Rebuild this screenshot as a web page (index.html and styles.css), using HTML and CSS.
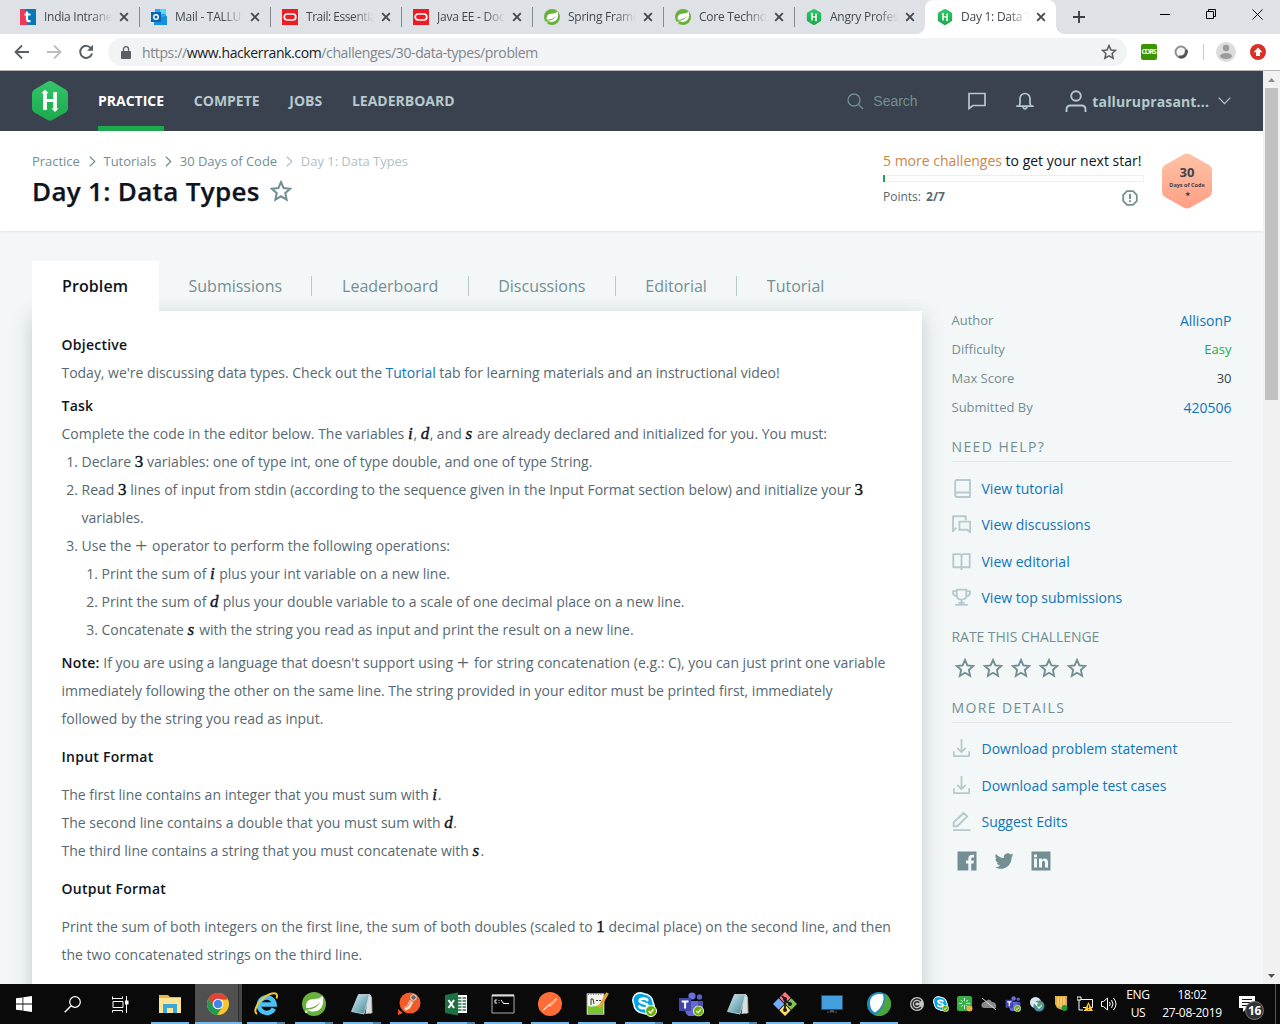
FILE: index.html
```html
<!DOCTYPE html>
<html lang="en">
<head>
<meta charset="utf-8">
<title>Day 1: Data Types | HackerRank</title>
<link rel="stylesheet" href="styles.css">
</head>
<body>
<svg class="defs" width="0" height="0">
  <defs>
    <linearGradient id="green" x1="0" y1="0" x2="0" y2="1"><stop offset="0" stop-color="#33c66a"/><stop offset="1" stop-color="#1ba94c"/></linearGradient>
    <linearGradient id="peach" x1="0" y1="0" x2="0" y2="1"><stop offset="0" stop-color="#ffc3a6"/><stop offset="1" stop-color="#ff9f86"/></linearGradient>
    <linearGradient id="glass" x1="0" y1="0" x2="1" y2="1"><stop offset="0" stop-color="#d5eef3"/><stop offset="1" stop-color="#3b8294"/></linearGradient>
    <symbol id="hr" viewBox="0 0 36 40"><path fill="url(#green)" d="M15.500.8q2.500-1.500 5 0l13 7.600q2.500 1.500 2.500 4v15q0 2.500-2.500 4l-13 7.700q-2.500 1.500-5 0l-13-7.700q-2.500-1.500-2.500-4v-15q0-2.500 2.500-4z"/><path fill="#fff" d="M11 12.200H9.200L13 8.700l3.600 3.500h-1.700V18h6.400v-7h3.600v16.500h1.700L23 31l-3.600-3.500h1.800V21h-6.300v8H11z"/></symbol>
    <symbol id="oracle" viewBox="0 0 16 16"><path fill="#ed1c24" d="M0 0h16v16H0z"/><rect x="2.200" y="5" width="11.600" height="6" rx="3" fill="none" stroke="#fff" stroke-width="1.700"/></symbol>
    <symbol id="spring" viewBox="0 0 24 24"><circle cx="12" cy="12" r="12" fill="#68b13a"/><path fill="#fff" d="M20.500 3.500c1.800 6.700.5 15.500-8.500 16-3 .1-5-.8-7.300-1.800 6 .1 11-2.700 13.800-8-4 4.500-8.300 6-14.300 6.600C3 7 9 7.200 14.500 6.700c2.500-.2 4.500-1 6-3.200z"/><circle cx="4.200" cy="19.800" r="1.200" fill="#fff"/></symbol>
    <symbol id="star" viewBox="0 0 20 20"><path fill="none" stroke="currentColor" stroke-width="1.900" stroke-linejoin="miter" d="M10 2l2.400 5.400 5.800.6-4.300 3.900 1.200 5.900-5.100-3-5.100 3 1.200-5.900L1.800 8l5.800-.6z"/></symbol>
    <symbol id="x" viewBox="0 0 10 10"><path stroke="#45494d" stroke-width="1.900" d="M1.200 1.200l7.600 7.600M8.800 1.200L1.200 8.800"/></symbol>
    <symbol id="chev" viewBox="0 0 7 11"><path fill="none" stroke="currentColor" stroke-width="1.200" d="M.8.800l5 4.700-5 4.700"/></symbol>
    <symbol id="notepad" viewBox="0 0 24 24"><path fill="#b9a078" d="M20 3l2 2 .5 16-3 1z"/><path fill="#d9dfe0" d="M18 2.500l3 .5.500 18-6 1z"/><path fill="url(#glass)" stroke="#cbdde0" stroke-width=".8" d="M8.500 2.500h11l-5.500 19.500L1.500 19.500z"/></symbol>
    <symbol id="dl" viewBox="0 0 18 18"><path fill="none" stroke="currentColor" stroke-width="1.700" d="M9 0v12M5 8.500L9 12.500l4-4M1.800 11.500v4.700h14.400v-4.700"/></symbol>
    <symbol id="check" viewBox="0 0 12 12"><circle cx="6" cy="6" r="5.500" fill="#6bae0e" stroke="#fff"/><path d="M3.500 6l2 2 3.200-4" fill="none" stroke="#fff" stroke-width="1.300"/></symbol>
    <symbol id="skype" viewBox="0 0 24 24"><circle cx="8.500" cy="8.500" r="8.500" fill="#eaf8fd"/><circle cx="15.500" cy="15.500" r="8.500" fill="#eaf8fd"/><circle cx="12" cy="12" r="11" fill="#eaf8fd"/><circle cx="8.500" cy="8.500" r="6.700" fill="#00a5e3"/><circle cx="15.500" cy="15.500" r="6.700" fill="#00a5e3"/><circle cx="12" cy="12" r="9.300" fill="#00a5e3"/><path d="M16 8.500c-1-2-8-2.500-8 .7 0 3.300 8.300 2 8.300 5.300s-7.500 3-8.600.5" fill="none" stroke="#fff" stroke-width="2.700" stroke-linecap="round"/></symbol>
    <symbol id="teams" viewBox="0 0 26 24"><circle cx="14" cy="4" r="3.600" fill="#6a70d6"/><circle cx="21.500" cy="5" r="2.700" fill="#5b60c8"/><path fill="#4b50b0" d="M17 9h8v7a4.500 4.500 0 0 1-8 2z"/><path fill="#6268d5" d="M7 9h13v8a6.500 6.500 0 0 1-13 2z"/><path fill="#4147a8" d="M1 6h12v13H1z"/><path d="M3.700 9.500h6.800M7.100 9.500v7" stroke="#fff" stroke-width="2"/></symbol>
  </defs>
</svg>

<div class="tabstrip">
  <div class="tab"><svg width="16" height="16" viewBox="0 0 16 16"><path fill="#0877b5" d="M0 0h16v16H0z"/><path fill="#f2385a" d="M0 0h5l3 16H0z"/><path d="M7 2.500v8q0 2 3.500 1.600M4.500 5.500h6" fill="none" stroke="#fff" stroke-width="2.200"/></svg><span>India Intrane</span><svg class="close"><use href="#x"/></svg></div>
  <div class="tab"><svg width="16" height="16" viewBox="0 0 16 16"><path fill="#28a8ea" d="M4 0h11v8H4z"/><path fill="#50d9ff" d="M9 0h6v5H9z"/><path fill="#1490df" d="M3 9l13-2v9H3z"/><path fill="#0a65b0" d="M0 3h10v10H0z"/><circle cx="5" cy="8" r="2.300" fill="none" stroke="#fff" stroke-width="1.500"/></svg><span>Mail - TALLU</span><svg class="close"><use href="#x"/></svg></div>
  <div class="tab"><svg width="16" height="16"><use href="#oracle"/></svg><span class="snug">Trail: Essentia</span><svg class="close"><use href="#x"/></svg></div>
  <div class="tab"><svg width="16" height="16"><use href="#oracle"/></svg><span>Java EE - Doc</span><svg class="close"><use href="#x"/></svg></div>
  <div class="tab"><svg width="16" height="16"><use href="#spring"/></svg><span>Spring Frame</span><svg class="close"><use href="#x"/></svg></div>
  <div class="tab"><svg width="16" height="16"><use href="#spring"/></svg><span>Core Technol</span><svg class="close"><use href="#x"/></svg></div>
  <div class="tab last"><svg width="16" height="16"><use href="#hr"/></svg><span>Angry Profes</span><svg class="close"><use href="#x"/></svg></div>
  <div class="tab active"><svg width="16" height="16"><use href="#hr"/></svg><span>Day 1: Data T</span><svg class="close"><use href="#x"/></svg></div>
  <svg class="plus" width="12" height="12" viewBox="0 0 12 12"><path d="M6 0v12M0 6h12" stroke="#3c4043" stroke-width="1.900"/></svg>
  <div class="winbtns">
    <svg width="11" height="11"><path d="M0 5.500h10" stroke="#000"/></svg>
    <svg width="11" height="11"><path d="M.5 2.500h7v7h-7zM2.500 2.500v-2h7v7h-2" fill="none" stroke="#000"/></svg>
    <svg width="11" height="11"><path d="M.5.500l10 10M10.500.500l-10 10" stroke="#000"/></svg>
  </div>
</div>

<div class="toolbar">
  <svg class="tb" width="16" height="16" viewBox="0 0 16 16"><path d="M15 8H2M8 1.500L1.500 8 8 14.500" fill="none" stroke="#5a5e62" stroke-width="1.800"/></svg>
  <svg class="tb" width="16" height="16" viewBox="0 0 16 16"><path d="M1 8h13M8 1.500L14.500 8 8 14.500" fill="none" stroke="#babcbe" stroke-width="1.800"/></svg>
  <svg class="tb" width="16" height="16" viewBox="0 0 16 16"><path d="M13.200 4.500A6 6 0 1 0 14 9.500" fill="none" stroke="#5a5e62" stroke-width="2"/><path d="M15 .8v6H9z" fill="#5a5e62"/></svg>
  <div class="omni">
    <svg width="10" height="13" viewBox="0 0 10 13"><path fill="#5a5e62" d="M1 5h8q1 0 1 1v6q0 1-1 1H1q-1 0-1-1V6q0-1 1-1z"/><path d="M2.500 6V3.200a2.500 2.500 0 0 1 5 0V6" fill="none" stroke="#5a5e62" stroke-width="1.300"/></svg>
    <div class="url">https://<b>www.hackerrank.com</b>/challenges/30-data-types/problem</div>
    <svg class="bm" width="16" height="16"><use href="#star"/></svg>
  </div>
  <div class="ext">
    <div class="cors">CORS</div>
    <svg width="14" height="14" viewBox="0 0 14 14"><circle cx="7" cy="7" r="5.500" fill="#f6f6f6" stroke="#8d8f90" stroke-width="2"/><path d="M12 5a5.200 5.200 0 0 1-7 6.500" fill="none" stroke="#505254" stroke-width="3"/></svg>
    <i></i>
    <svg width="20" height="20" viewBox="0 0 20 20"><circle cx="10" cy="10" r="10" fill="#dcdcdc"/><circle cx="10" cy="6" r="3.200" fill="#9b9b9b"/><ellipse cx="10" cy="14" rx="6" ry="3" fill="#9b9b9b"/></svg>
    <svg width="16" height="16" viewBox="0 0 16 16"><circle cx="8" cy="8" r="8" fill="#d93025"/><path fill="#fff" d="M8 3.500l4.500 4.700H10V12H6V8.200H3.500z"/></svg>
  </div>
</div>

<div class="viewport">
  <div class="page">
    <header class="nav">
      <svg class="logo" width="36" height="40"><use href="#hr"/></svg>
      <a class="on">PRACTICE</a><a class="compete">COMPETE</a><a class="jobs">JOBS</a><a>LEADERBOARD</a>
      <div class="search"><svg width="17" height="17" viewBox="0 0 17 17"><circle cx="7" cy="7" r="6" fill="none" stroke="#738f93" stroke-width="1.300"/><path d="M11.500 11.500l4.500 4.500" stroke="#738f93" stroke-width="1.300"/></svg>Search</div>
      <svg class="chat" width="18" height="18" viewBox="0 0 18 18"><path d="M1 1.500h16v12H5l-4 3z" fill="none" stroke="#b7c9cc" stroke-width="1.700"/></svg>
      <svg class="bell" width="18" height="18" viewBox="0 0 18 18"><path d="M.3 14.200h17.400M3 14q1-1.600 1-3V6.500a5 5 0 0 1 10 0V11q0 1.400 1 3M6.800 15q2.200 3.800 4.400 0" fill="none" stroke="#b7c9cc" stroke-width="1.700"/></svg>
      <svg class="person" width="22" height="23" viewBox="0 0 22 23"><circle cx="11" cy="6" r="4.800" fill="none" stroke="#b7c9cc" stroke-width="1.900"/><path d="M1.500 22v-2.500q0-4 4-4h11q4 0 4 4V22" fill="none" stroke="#b7c9cc" stroke-width="1.900"/></svg>
      <span class="user">talluruprasant...</span>
      <svg width="13" height="8" viewBox="0 0 13 8"><path d="M.7.700l5.800 6 5.800-6" fill="none" stroke="#b7c9cc" stroke-width="1.200"/></svg>
    </header>

    <section class="top">
      <div class="titles">
        <div class="crumbs">Practice<svg><use href="#chev"/></svg>Tutorials<svg><use href="#chev"/></svg>30 Days of Code<span><svg><use href="#chev"/></svg>Day 1: Data Types</span></div>
        <h1>Day 1: Data Types<svg width="22" height="22"><use href="#star"/></svg></h1>
      </div>
      <div class="progress">
        <div class="next"><em>5 more challenges</em> to get your next star!</div>
        <div class="bar"><i></i></div>
        <div class="points"><span>Points: <b>2/7</b></span><svg width="16" height="16" viewBox="0 0 16 16"><path d="M5 1.200h6L14.800 5v6L11 14.800H5L1.200 11V5z" fill="none" stroke="#738f93" stroke-width="1.800"/><path d="M8 4v5M8 10.300v1.700" stroke="#738f93" stroke-width="2"/></svg></div>
      </div>
      <div class="badge">
        <svg width="50" height="56" viewBox="0 0 50 56"><path fill="url(#peach)" d="M22 1.300q3-1.600 6 0L47 12q3 1.800 3 5v22q0 3.200-3 5L28 54.700q-3 1.600-6 0L3 44q-3-1.800-3-5V17q0-3.200 3-5z"/></svg>
        <div><b>30</b><small>Days of Code</small><small>★</small></div>
      </div>
    </section>

    <div class="body">
      <main>
        <nav class="tabs"><a class="cur">Problem</a><a>Submissions</a><a>Leaderboard</a><a>Discussions</a><a>Editorial</a><a>Tutorial</a></nav>
        <article>
          <h2>Objective</h2>
          <p class="first">Today, we're discussing data types. Check out the <a>Tutorial</a> tab for learning materials and an instructional video!</p>
          <h2>Task</h2>
          <p class="tight">Complete the code in the editor below. The variables <i class="mi">i</i>, <i class="md">d</i>, and <i class="ms">s</i> are already declared and initialized for you. You must:</p>
          <ol>
            <li>Declare <b class="m">3</b> variables: one of type int, one of type double, and one of type String.</li>
            <li>Read <b class="m">3</b> lines of input from stdin (according to the sequence given in the Input Format section below) and initialize your <b class="m">3</b><br>variables.</li>
            <li>Use the <span class="pl">+</span> operator to perform the following operations:
              <ol>
                <li>Print the sum of <i class="mi">i</i> plus your int variable on a new line.</li>
                <li>Print the sum of <i class="md">d</i> plus your double variable to a scale of one decimal place on a new line.</li>
                <li>Concatenate <i class="ms">s</i> with the string you read as input and print the result on a new line.</li>
              </ol>
            </li>
          </ol>
          <p class="note"><strong>Note:</strong> If you are using a language that doesn't support using <span class="pl">+</span> for string concatenation (e.g.: C), you can just print one variable<br>immediately following the other on the same line. The string provided in your editor must be printed first, immediately<br>followed by the string you read as input.</p>
          <h2>Input Format</h2>
          <p class="fmt">The first line contains an integer that you must sum with <i class="mi">i</i>.<br>The second line contains a double that you must sum with <i class="md">d</i>.<br>The third line contains a string that you must concatenate with <i class="ms">s</i>.</p>
          <h2>Output Format</h2>
          <p class="fmt">Print the sum of both integers on the first line, the sum of both doubles (scaled to <b class="m">1</b> decimal place) on the second line, and then<br>the two concatenated strings on the third line.</p>
        </article>
      </main>
      <aside>
        <dl>
          <div><dt>Author</dt><dd class="link">AllisonP</dd></div>
          <div><dt>Difficulty</dt><dd class="easy">Easy</dd></div>
          <div><dt>Max Score</dt><dd>30</dd></div>
          <div><dt>Submitted By</dt><dd class="link">420506</dd></div>
        </dl>
        <h3>NEED HELP?</h3>
        <ul>
          <li><svg viewBox="0 0 18 18"><path d="M5 .9h12v16.200H5q-2 0-2-2V2.900q0-2 2-2zM3 14.500q0-1.700 2-1.700h12"/></svg>View tutorial</li>
          <li><svg viewBox="0 0 18 18"><path d="M1 16V1.200h12V5M1 15l3-3M7 6.300h10.200v10.200L14.500 14H7z"/></svg>View discussions</li>
          <li><svg viewBox="0 0 18 18"><path d="M9 17v-2.500H1.200V2H7q2 0 2 2 0-2 2-2h5.800v12.500H9M9 3v12"/></svg>View editorial</li>
          <li><svg viewBox="0 0 18 18"><path d="M4.500 1.500h9v6q0 3-4.500 3.500-4.500-.5-4.500-3.500zM4.500 3H1q-.5 4.500 4 5M13.500 3H17q.5 4.500-4 5M9 11v5M3 16h12M6 14h6"/></svg>View top submissions</li>
        </ul>
        <h4>RATE THIS CHALLENGE</h4>
        <div class="stars"><svg><use href="#star"/></svg><svg><use href="#star"/></svg><svg><use href="#star"/></svg><svg><use href="#star"/></svg><svg><use href="#star"/></svg></div>
        <h3 class="more">MORE DETAILS</h3>
        <ul>
          <li><svg><use href="#dl"/></svg>Download problem statement</li>
          <li><svg><use href="#dl"/></svg>Download sample test cases</li>
          <li><svg viewBox="0 0 18 18"><path d="M1 17.200h16.500M1.500 13.500v-3.500L11 1l3.500 3.200-9.500 9.300z"/></svg>Suggest Edits</li>
        </ul>
        <div class="social">
          <svg viewBox="0 0 20 20"><path fill="#738f93" d="M.5.500h19v19h-5.300v-7h2.300l.4-2.900h-2.700V7.800q0-1.400 1.400-1.400h1.500V3.800q-5.800-.8-5.800 3.700v2.100H9v2.900h2.300v7H.5z"/></svg>
          <svg viewBox="0 0 24 24"><path fill="#738f93" d="M23.600 4.900c-.8.400-1.700.6-2.700.8 1-.6 1.700-1.500 2-2.600-.9.500-1.900.9-3 1.100a4.700 4.700 0 0 0-8 4.300C8 8.300 4.500 6.400 2.200 3.600c-1.200 2.100-.6 4.900 1.500 6.300-.8 0-1.500-.2-2.100-.6 0 2.200 1.500 4.200 3.800 4.700-.7.200-1.400.2-2.100.1.600 1.900 2.300 3.200 4.400 3.300A9.500 9.500 0 0 1 .7 19.300c9.500 5.600 20.600-.5 20.500-12 .9-.7 1.700-1.500 2.400-2.400z"/></svg>
          <svg viewBox="0 0 20 20"><path fill="#738f93" d="M.5.500h19v19H.5z"/><path fill="#f3f7f7" d="M3 7.500h3v9H3zM3 3.500h3v2.700H3zM8 7.500h2.800V9c1.400-2.500 6.200-2.300 6.200 2v5.500h-3v-5c0-2.300-3-2.200-3 0v5H8z"/></svg>
        </div>
      </aside>
    </div>
  </div>
  <div class="scroll"><svg width="17" height="17"><path d="M5 11l3.500-4 3.500 4z" fill="#8e8e8e"/></svg><i></i><svg class="down" width="17" height="17"><path d="M5 7l3.500 4L12 7z" fill="#505050"/></svg></div>
</div>

<footer class="taskbar">
  <div class="sys"><svg width="16" height="16" viewBox="0 0 16 16"><path fill="#fff" d="M0 2.300L6.500 1.400v6.200H0zM7.300 1.300L16 0v7.600H7.300zM0 8.400h6.500v6.200L0 13.700zM7.300 8.400H16V16l-8.700-1.300z"/></svg></div>
  <div class="sys"><svg width="17" height="17" viewBox="0 0 17 17"><circle cx="11" cy="6" r="5.300" fill="none" stroke="#fff" stroke-width="1.200"/><path d="M7.200 9.800L.7 16.300" stroke="#fff" stroke-width="1.400"/></svg></div>
  <div class="sys"><svg width="17" height="17" viewBox="0 0 17 17"><path d="M.5 3.500v-3M.5 2.500h10v-2M1 5.500h10v6H1zM.5 16.500v-2h10v2M14.500 0v17" fill="none" stroke="#fff"/><path fill="#fff" d="M13 4.500h3.500v4H13z"/></svg></div>
  <div class="app first"><svg viewBox="0 0 24 24"><path fill="#e7b849" d="M1 3h9l2 2h11v16H1z"/><path fill="#ffe494" d="M1 6h22v15H1z"/><path fill="#3aa7db" d="M5 12h14v9h-4v-5H9v5H5z"/></svg></div>
  <div class="app chrome"><svg viewBox="0 0 24 24"><circle cx="12" cy="12" r="11" fill="#f8c62f"/><path fill="#dc4437" d="M2.500 6.500A11 11 0 0 1 22 7.500H12l-5 7z"/><path fill="#229a56" d="M2.500 6.500A11 11 0 0 0 11 23l5.500-8.500-9 0z"/><circle cx="12" cy="12" r="5.300" fill="#fff"/><circle cx="12" cy="12" r="4.300" fill="#4385ed"/></svg></div>
  <div class="app multi"><svg viewBox="0 0 24 24"><path d="M19.800 16.500A7.800 7.800 0 1 1 20.500 12.500H7" fill="none" stroke="#49c2f3" stroke-width="4.600"/><path d="M3 22C-4 17 13-1 21.500 1.500q2.500 1 1 5" fill="none" stroke="#f3c53c" stroke-width="2"/></svg></div>
  <div class="app multi"><svg><use href="#spring"/></svg></div>
  <div class="app n multi"><svg><use href="#notepad"/></svg></div>
  <div class="app n"><svg viewBox="0 0 24 24"><circle cx="13" cy="11" r="10.500" fill="#f15a29"/><path d="M14.500 9l-3 6-4 2" stroke="#f7ddd0" stroke-width="4" fill="none"/><path d="M14 9l-3 5-4 2" stroke="#e0764f" fill="none"/><circle cx="16.500" cy="5.500" r="2.800" fill="#666" stroke="#eee"/><path fill="#e95420" d="M1 17l5 4-5 2z"/></svg></div>
  <div class="app n multi"><svg viewBox="0 0 24 24"><path fill="#fff" d="M12 3h11v18H12z"/><path d="M14 6h3.500M14 9h3.500M14 12h3.500M14 15h3.500M14 18h3.500M18.500 6H22M18.500 9H22M18.500 12H22M18.500 15H22M18.500 18H22" stroke="#217346" stroke-width="1.700"/><path fill="#1d7044" d="M1 3l13-2.500v23L1 21z"/><path d="M4.500 8l5.500 8M10 8l-5.500 8" stroke="#fff" stroke-width="2"/></svg></div>
  <div class="app n"><svg viewBox="0 0 24 24"><path fill="#050505" stroke="#a9adb0" d="M1 3h22v18H1z"/><path stroke="#dadddf" stroke-width="2" d="M1 3.500h22"/><path d="M6 8H4v3h2M8 8v.8M8 10.300v.8M10 8l3 4M13 11.500h5" stroke="#fff" fill="none"/></svg></div>
  <div class="app n"><svg viewBox="0 0 24 24"><circle cx="12" cy="12" r="12" fill="#ff6c37"/><path d="M5 18.500l7-6.500" stroke="#fde5dc" stroke-width="1.200"/><path d="M10 13.500l7-6.500 2-.8-.8 2.300-6 6z" fill="#fde5dc"/><path d="M12 13l5-5" stroke="#ff6c37" stroke-width=".8"/></svg></div>
  <div class="app n"><svg viewBox="0 0 24 24"><path fill="#f5f5ee" stroke="#999" d="M2 1.500h17v21H2z"/><path d="M3 2h15" stroke="#888" stroke-dasharray="1 1.500" stroke-width="2"/><path fill="#77c52f" d="M3 14q9 2 15-4v12H3z"/><path d="M6 13V7h2l1 5M11 8.500h2M14 8.500h2" stroke="#333" fill="none"/><path d="M22.500 1L14 16" stroke="#e5a52e" stroke-width="3"/></svg></div>
  <div class="app n multi"><svg viewBox="0 0 24 24"><use href="#skype" width="23" height="23"/><use href="#check" x="13" y="13" width="12" height="12"/></svg></div>
  <div class="app n"><svg viewBox="0 0 24 24"><use href="#teams" x="-1" width="26" height="24"/><use href="#check" x="14" y="13.500" width="11" height="11"/></svg></div>
  <div class="app n multi"><svg><use href="#notepad"/></svg></div>
  <div class="app n"><svg viewBox="0 0 24 24"><path fill="#f47c7c" d="M12 0l5.700 5.700-5.700 5.700-5.700-5.700z"/><path fill="#75a9f9" d="M5.700 6.300l5.700 5.700-5.700 5.700L0 12z"/><path fill="#7fc25c" d="M18.300 6.300L24 12l-5.700 5.700-5.700-5.700z"/><path fill="#ffe066" d="M12 12.600l5.700 5.700L12 24l-5.700-5.700z"/><path d="M9 4l3 3v11M12 8l5 4" fill="none" stroke="#201a1a" stroke-width="1.800"/><g fill="#201a1a"><circle cx="12" cy="7" r="2"/><circle cx="17" cy="12" r="2"/><circle cx="12" cy="18" r="2"/></g></svg></div>
  <div class="app n"><svg viewBox="0 0 24 24"><path fill="#459fdf" stroke="#24506e" d="M1.500 3.500h21v14h-21z"/><path fill="#47515a" d="M10 18h4v1.500h3v1H7v-1h3z"/></svg></div>
  <div class="app n"><svg viewBox="0 0 24 24"><circle cx="12" cy="12" r="12" fill="#218bc0"/><path fill="#4aa53a" d="M18 1.600A12 12 0 0 1 8 23.300Q19 16 18 1.600z"/><path fill="#fff" d="M3 11C3 4 9 1 16 2.500c2 6-2 15-8 18Q3 18 3 11z"/></svg></div>
  <div class="tray">
    <svg viewBox="0 0 16 16"><circle cx="8" cy="8" r="7" fill="#c7c7c7"/><path d="M12 5a5 5 0 1 0 0 6M10 7a2.300 2.300 0 1 0 0 2" fill="none" stroke="#292929" stroke-width="1.500"/></svg>
    <svg viewBox="0 0 16 16"><use href="#skype" width="15" height="15"/><use href="#check" x="9" y="9" width="7" height="7"/></svg>
    <svg viewBox="0 0 16 16"><rect width="15" height="15" rx="2" fill="#37ad4a"/><path d="M7.500 2v11M2 7.500h11M4 4l7 7M11 4l-7 7" stroke="#dff3dc" stroke-dasharray="3 4 4"/><circle cx="12.500" cy="12.500" r="3" fill="#e9b044"/></svg>
    <svg viewBox="0 0 16 16"><path fill="#8b8b8b" d="M3 12a3 3 0 0 1 1-6q4-5 7 0 5 0 4 6z"/><path d="M1 2l14 12" stroke="#ddd"/></svg>
    <svg viewBox="0 0 16 16"><use href="#teams" width="16" height="15"/><use href="#check" x="9" y="9" width="7" height="7"/></svg>
    <svg viewBox="0 0 16 16"><circle cx="6.500" cy="6.500" r="5.500" fill="#d5e8ec"/><circle cx="10" cy="10" r="5.500" fill="#4f8da0"/><path fill="#f3f7f1" d="M4 6q7 0 9 4l-3 3z"/><circle cx="10" cy="9" r="2" fill="#59ad55"/></svg>
    <svg viewBox="0 0 16 16"><path fill="#e3ad3f" d="M2 0h12v10l-5 4-5-2-2-4z"/><path d="M5 1v9M8 1v10M11 1v8" stroke="#ffe5a0"/><circle cx="11.500" cy="12" r="3" fill="#2a963c"/></svg>
    <svg viewBox="0 0 16 16"><path d="M0 1h4v3H0zM2 4v10h4M4 3.500h11.500v8H6M10 12v3M7 14.500h6" fill="none" stroke="#fff"/><path fill="#ffc629" d="M11.500 6l4.500 9H7z"/><path d="M11.500 9v3M11.500 13v1" stroke="#222"/></svg>
    <svg viewBox="0 0 16 16"><path d="M.5 5.500h2l4-3.500v12l-4-3.500h-2zM8.500 6q1.500 2 0 4M10.500 4q3 4 0 8M12.500 2q5 6 0 12" fill="none" stroke="#fff"/></svg>
  </div>
  <div class="lang">ENG<br>US</div>
  <div class="clock">18:02<br>27-08-2019</div>
  <div class="notif"><svg width="25" height="25" viewBox="0 0 25 25"><path fill="#fff" d="M0 1h16v12H8l-4 4v-4H0z"/><path d="M3 4.500h10M3 7.500h10M3 10.500h6" stroke="#111"/><circle cx="15.500" cy="15.500" r="9" fill="#333" stroke="#777"/></svg><b>16</b></div>
</footer>
</body>
</html>
```
FILE: styles.css
```css
* { box-sizing: border-box; }
body { margin: 0; width: 1280px; height: 1024px; overflow: hidden; display: flex; flex-direction: column; font: 14px "Open Sans", sans-serif; background: #fff; }
.defs { position: absolute; }
svg { flex: none; display: block; }
h1, h2, h3, h4, p, ol, ul, dl, dd { margin: 0; padding: 0; }

/* browser chrome */
.tabstrip { height: 34px; flex: none; background: #dee1e6; padding-left: 8px; display: flex; align-items: center; }
.tab { width: 131px; height: 34px; padding-left: 12px; display: flex; align-items: center; position: relative; font-size: 12px; color: #45494d; }
.tab span { width: 74px; margin: -1px 0 0 8px; white-space: nowrap; letter-spacing: -.25px; -webkit-mask-image: linear-gradient(90deg, #000 64%, transparent 92%); mask-image: linear-gradient(90deg, #000 64%, transparent 92%); }
.tab .snug { letter-spacing: -.45px; }
.tab::after { content: ""; position: absolute; right: -1px; top: 7px; width: 1px; height: 20px; background: #878a8e; }
.tab.last::after { display: none; }
.close { width: 10px; height: 10px; margin-left: 1px; }
.tab.active { background: #fff; border-radius: 8px 8px 0 0; }
.tab.active::before, .tab.active::after { content: ""; position: absolute; top: auto; bottom: 0; width: 8px; height: 8px; }
.tab.active::before { left: -8px; background: radial-gradient(circle at 0 0, #dee1e6 7.500px, #fff 8px); }
.tab.active::after { right: -8px; background: radial-gradient(circle at 100% 0, #dee1e6 7.500px, #fff 8px); }
.plus { margin-left: 17px; }
.winbtns { margin: -6px 0 0 auto; display: flex; gap: 35px; padding-right: 17px; }
.toolbar { height: 37px; flex: none; border-bottom: 1px solid #b4b6b5; display: flex; align-items: center; padding-left: 14px; }
.tb { margin-right: 16px; }
.tb:nth-child(3) { margin-right: 14px; }
.omni { width: 1019px; height: 28px; border-radius: 14px; background: #f1f3f4; display: flex; align-items: center; padding: 0 10px 0 13px; color: #80868b; }
.url { margin-left: 11px; white-space: nowrap; letter-spacing: -.38px; }
.url b { font-weight: 400; color: #202124; }
.bm { margin-left: auto; color: #5a5e62; }
.ext { display: flex; align-items: center; margin-left: 14px; }
.cors { width: 16px; height: 16px; border-radius: 2px; background: #3c9500; color: #fff; font: bold 7px/16px "Open Sans", sans-serif; letter-spacing: -1.100px; text-indent: -1px; text-align: center; }
.ext svg:nth-child(2) { margin: 0 15px 0 17px; }
.ext i { width: 1px; height: 16px; background: #c8cacc; margin-right: 12px; }
.ext svg:last-child { margin-left: 14px; }
.viewport { height: 913px; display: flex; flex: none; overflow: hidden; }
.page { width: 1263px; background: #f3f7f7; overflow: hidden; }
.scroll { width: 17px; background: #f1f1f1; display: flex; flex-direction: column; }
.scroll i { width: 13px; height: 312px; margin-left: 2px; background: #c1c1c1; }
.down { margin-top: auto; }

/* site header */
.nav { height: 60px; background: #39424e; display: flex; align-items: center; padding-left: 32px; color: #b7c9cc; font-weight: 700; }
.nav a { height: 60px; line-height: 60px; margin-right: 29.700px; }
.logo { margin-right: 30px; }
.nav .on { color: #fff; border-bottom: 5px solid #1ba94c; }
.search { display: flex; align-items: center; gap: 9px; width: 121px; margin-left: 363px; font: 14px "Liberation Sans", sans-serif; color: #738f93; }
.bell { margin-left: 30px; }
.person { margin-left: 31px; }
.user { width: 118px; margin: 1px 8px 0 5px; white-space: nowrap; letter-spacing: .15px; }
.top { height: 100px; background: #fff; box-shadow: 0 1px 2px rgba(0,0,0,.08); display: flex; padding-left: 32px; }
.titles { width: 851px; }
.crumbs { display: flex; align-items: center; height: 20px; margin-top: 20px; font-size: 13px; letter-spacing: -.04px; color: #738f93; }
.crumbs svg { width: 7px; height: 11px; margin: 0 8px 0 8.800px; }
.crumbs span { display: flex; align-items: center; color: #b0c1c5; }
h1 { display: flex; align-items: center; height: 38px; margin-top: 1px; font-size: 26px; font-weight: 600; letter-spacing: .32px; -webkit-text-stroke: .25px; color: #0e141e; }
h1 svg { margin-left: 10px; color: #738f93; }
.progress { width: 261px; padding-top: 20px; color: #0e141e; }
.next { height: 20px; line-height: 20px; white-space: nowrap; }
.next em { font-style: normal; color: #cd8544; }
.bar { height: 7px; margin-top: 4px; border: 1px solid #eee; }
.bar i { display: block; width: 2px; height: 7px; margin: -1px; background: #1ba94c; }
.points { display: flex; justify-content: space-between; align-items: center; padding: 4px 6px 0 0; font-size: 12px; color: #576871; }
.points b { margin-left: 2px; }
.points svg { margin-top: 4px; }
.badge { display: grid; margin: 22px 0 0 18px; height: 56px; color: #39424e; text-align: center; }
.badge > * { grid-area: 1 / 1; }
.badge div { padding-top: 10px; }
.badge b { display: block; font-size: 13px; line-height: 18px; }
.badge small { display: block; font-size: 5.500px; font-weight: 700; line-height: 9px; white-space: nowrap; }

/* challenge */
.body { display: flex; padding: 30px 0 0 32px; }
main { width: 890px; }
.tabs { position: relative; z-index: 1; display: flex; align-items: center; height: 50px; font-size: 16px; color: #738f93; }
.tabs a { padding: 0 29.300px 0 29.500px; line-height: 20px; border-right: 1px solid #b7c9cc; }
.tabs a + a + a { padding-left: 29.700px; }
.tabs a:last-child { border: 0; }
.tabs .cur { width: 127px; padding: 0 0 0 30px; line-height: 50px; background: #fff; color: #0e141e; font-weight: 600; letter-spacing: .1px; border: 0; }
article { height: 900px; background: #fff; box-shadow: 0 5px 20px rgba(50,70,80,.25); clip-path: inset(-12px -30px 0 -30px); padding: 20px 29.500px; line-height: 28px; color: #576871; white-space: nowrap; }
article h2, article strong { font-size: 14px; font-weight: 600; letter-spacing: .25px; color: #0e141e; }
article p { margin-bottom: 5px; }
article p.first { letter-spacing: -.025px; }
article p.tight { margin-bottom: 0; letter-spacing: -.01px; }
article p.note, article p.fmt { margin-bottom: 10px; }
article p.fmt { margin-top: 10px; }
article ol { padding-left: 20px; }
article > ol { margin-bottom: 5px; }
article a, .link, aside ul { color: #1174bb; }
.m, .mi, .md, .ms, .pl { display: inline-block; height: 20px; line-height: 20px; font-family: "Liberation Serif", serif; font-size: 17px; color: #0e141e; font-weight: 400; -webkit-text-stroke: .4px; }
.m { width: 8.700px; }
.mi { width: 5.500px; }
.md { width: 9px; }
.ms { width: 8px; }
.pl { width: 13.500px; position: relative; top: 2px; color: #576871; font-size: 22px; -webkit-text-stroke: 0; }

/* sidebar */
aside { width: 280px; margin-left: 29.500px; padding-top: 45px; }
dl div { display: flex; justify-content: space-between; line-height: 29px; }
dt { font-size: 13px; color: #738f93; }
dd { font-size: 13px; color: #39424e; }
dd.link { font-size: 14px; }
dd.easy { color: #1ba94c; }
h3, h4 { font-size: 14px; font-weight: 400; color: #738f93; }
h3 { margin: 11px 0 8.500px; height: 29px; line-height: 28px; letter-spacing: 1.400px; border-bottom: 1px solid #e3e9ea; }
h3.more { margin: 12px 0 7.800px; }
aside ul { list-style: none; }
aside li { display: flex; align-items: center; height: 36.300px; }
aside li svg { width: 19px; height: 19px; margin-right: 11px; color: #b7c9cc; fill: none; stroke: #b7c9cc; stroke-width: 1.800; stroke-linejoin: round; }
h4 { margin-top: 11.300px; height: 20px; line-height: 20px; letter-spacing: -.05px; }
.stars { display: flex; gap: 8px; height: 28px; align-items: center; margin: 7px 0 0 3.500px; color: #738f93; }
.stars svg { width: 20px; height: 20px; }
.social { display: flex; gap: 17px; margin: 11px 0 0 5.500px; }
.social svg { width: 20px; height: 20px; }

/* taskbar */
.taskbar { height: 40px; flex: none; background: #0a0a0a; display: flex; color: #fff; font-size: 12px; }
.sys { width: 48px; display: grid; place-items: center; }
.app { width: 48px; display: grid; place-items: center; position: relative; padding-right: 2px; }
.app svg { width: 24px; height: 24px; overflow: visible; }
.app.n { width: 47px; }
.app.first { margin-left: 3px; }
.app::after { content: ""; position: absolute; left: 4px; bottom: 0; width: 38px; height: 2px; background: #76b9ed; }
.app.multi::after { background: linear-gradient(90deg, #76b9ed 30px, #5484a8 30px); }
.app.chrome { background: linear-gradient(90deg, #505050 43px, #303030 43px, #303030 44px, #454545 44px, #454545 47px, #0a0a0a 47px); }
.app.chrome::after { left: 0; width: 47px; }
.tray { display: flex; align-items: center; gap: 8px; margin: 0 9px 0 6px; }
.tray svg { width: 16px; height: 16px; }
.lang, .clock { text-align: center; line-height: 18px; padding-top: 2px; letter-spacing: -.3px; }
.lang { width: 24px; }
.clock { width: 64px; margin-left: 10px; white-space: nowrap; }
.notif { display: grid; margin: 11px 0 0 15px; width: 28px; height: 27px; }
.notif > * { grid-area: 1 / 1; }
.notif b { padding: 7px 0 0 9px; font-size: 12px; line-height: 17px; letter-spacing: -.3px; }
.taskbar::after { content: ""; width: 1px; background: #555; margin-left: 8px; }
```
